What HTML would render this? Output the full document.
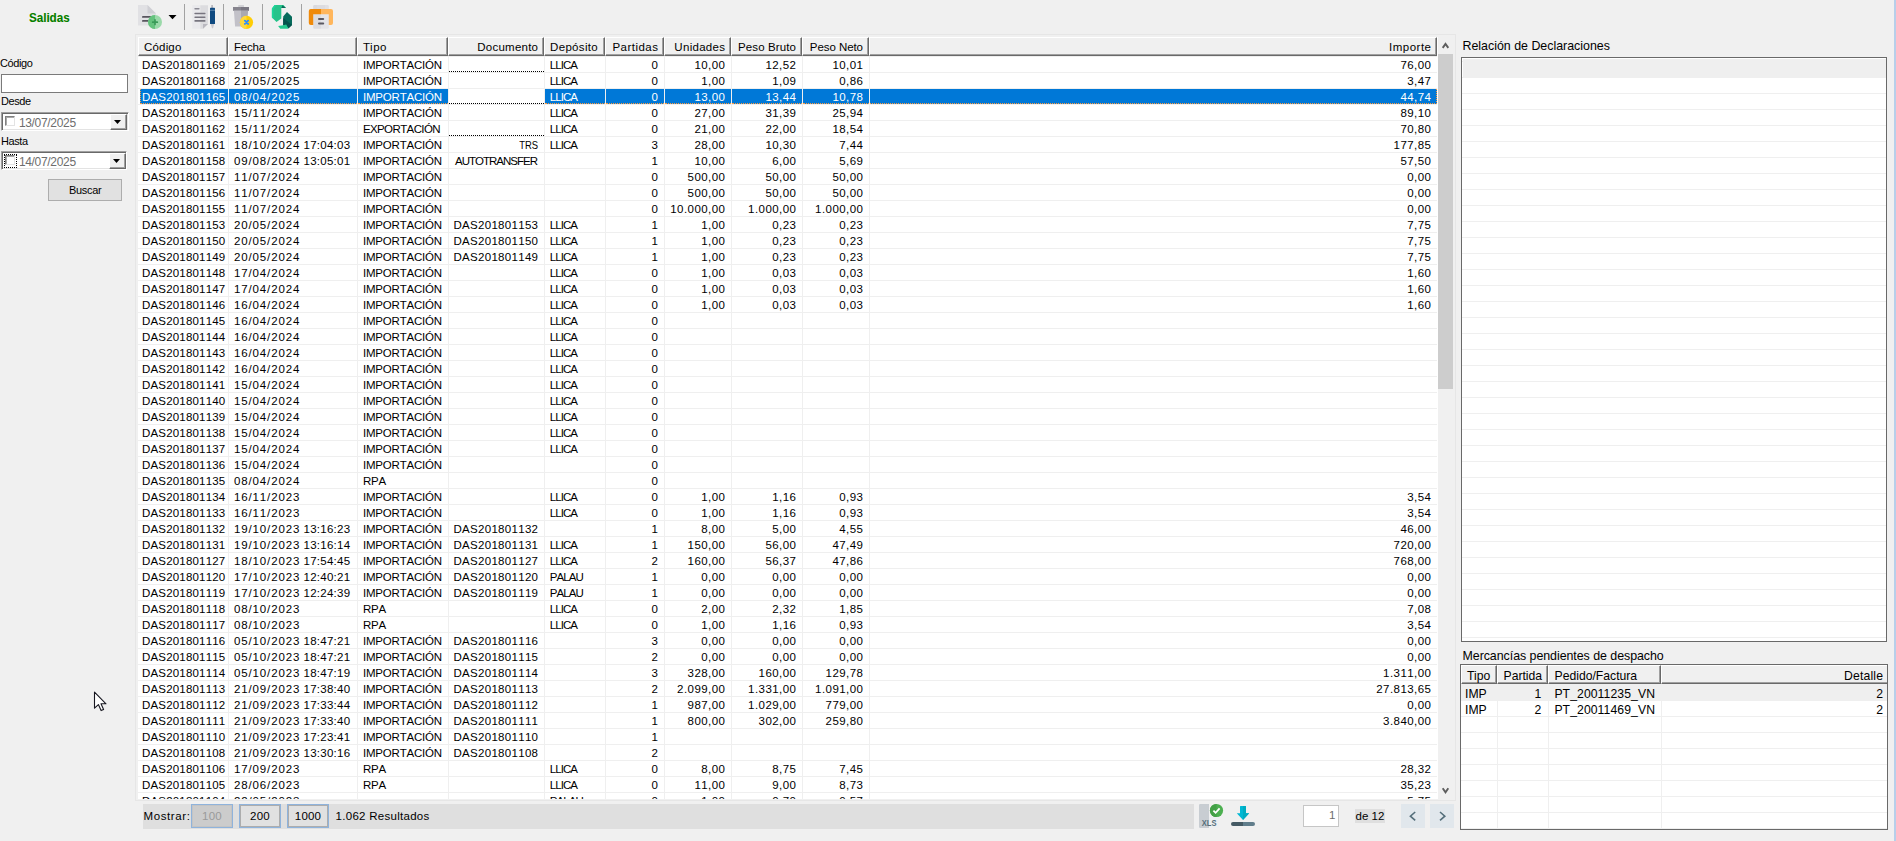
<!DOCTYPE html>
<html lang="es"><head><meta charset="utf-8"><title>Salidas</title>
<style>
*{box-sizing:border-box;margin:0;padding:0}
html,body{width:1896px;height:841px;overflow:hidden;background:#f0f0f0}
body{font-family:"Liberation Sans",sans-serif;font-size:12px;color:#000}
#app{position:relative;width:1896px;height:841px;overflow:hidden;background:#f0f0f0}
#app div,#app i,#app span.abs,#app svg{position:absolute}
i{display:block}

/* ===== main grid ===== */
#gframe{left:135px;top:34px;width:1321px;height:767px;border:1px solid #e6e6e6}
#grid{left:138px;top:37px;width:1300px;height:762px;background:#fff;overflow:hidden}
#ghead{left:0;top:0;width:1299px;height:19px;background:#f0f0f0}
.hc{top:0;height:19px;background:#f0f0f0;border-top:1px solid #fff;border-left:1px solid #fff;border-right:1px solid #696969;border-bottom:1px solid #696969;box-shadow:inset -1px -1px 0 #a0a0a0;line-height:16px;white-space:nowrap}
.hc span{position:absolute;top:1px}
.hc.l span{left:5px}
.hc.r span{right:5px}
.vl{top:19px;width:1px;height:743px;background:#efefef}
#rows{left:0;top:0;width:1299px;height:762px}
.row{left:0;width:1299px;height:16px;border-top:1px solid #efefef}
.c{top:0;height:15px;line-height:16px;white-space:nowrap}
.c span{position:absolute;top:0}
.c{font-size:11.5px;font-kerning:none}
.c.l span{left:4.9px}
.c4.l span{left:4.7px}
.c.r span{right:6px}
.c0.l span{left:2px}
.c0 span{letter-spacing:.18px}
.row.sel .c0.l span{left:1px}
.c1 span{letter-spacing:.88px;word-spacing:-.8px}
.c1 b.tm{font-weight:normal;letter-spacing:.26px}
.c2 span{letter-spacing:-.19px}
.c2.exp span{letter-spacing:-.6px}
.c3 span{letter-spacing:.3px;margin-right:-.3px}
.c3.up span{letter-spacing:-.99px;margin-right:.99px}
.c3.trs span{letter-spacing:0;margin-right:0;transform:scaleX(.82);transform-origin:100% 50%;right:6.1px}
.c4 span{letter-spacing:-.92px}
.c5 span,.c6 span,.c7 span,.c8 span,.c9 span{letter-spacing:.45px;margin-right:-.45px}
.hc{font-size:11.5px}
.h0 span{letter-spacing:.18px}
.h1 span{letter-spacing:-.22px}
.h2 span{letter-spacing:.5px}
.h3 span{letter-spacing:.24px;margin-right:-.24px}
.h4 span{letter-spacing:.34px}
.h5 span{letter-spacing:.48px;margin-right:-.48px}
.h6 span{letter-spacing:.29px;margin-right:-.29px}
.h7 span{letter-spacing:.12px;margin-right:-.12px}
.h8 span{letter-spacing:-.07px;margin-right:.07px}
.h9 span{letter-spacing:.5px;margin-right:-.5px}
.row.sel .c{background:#0078d7;color:#fff;border-bottom:1px dotted #ff9a3c}
.row.sel .c0{border-left:1px dotted #ff9a3c}
.row.sel .c9{border-right:1px dotted #ff9a3c}
.row.sel .c9 span{right:5px}
.row.sel .c3{background:#fff;border-bottom:1px dotted #000}
.c.dot{border-bottom:1px dotted #000}

/* ===== title / left panel ===== */
#title{left:29.4px;top:10.7px;font-size:12.8px;font-weight:bold;color:#008000;line-height:14px;white-space:nowrap;transform:scaleX(.906);transform-origin:0 0;text-shadow:.4px 0 0 rgba(190,160,0,.35)}
.lbl{font-size:11.6px;line-height:14px;letter-spacing:-.4px;white-space:nowrap;color:#000;transform:scaleX(.945);transform-origin:0 0}
#inp1{left:1px;top:74px;width:127px;height:19px;background:#fff;border:1px solid #7a7a7a}
.dtp{height:19px;background:#fff;border:1px solid;border-color:#a0a0a0 #fff #fff #a0a0a0;box-shadow:inset 1px 1px 0 #696969,inset -1px -1px 0 #e3e3e3}
.cb{left:3px;top:3px;width:10px;height:10px;background:#fff;border:1px solid;border-color:#808080 #e3e3e3 #e3e3e3 #808080;box-shadow:inset 1px 1px 0 #a9a9a9}
.foc{left:2px;top:2px;width:13px;height:14px;border:1px dotted #000}
.dt{left:16.9px;top:2.6px;font-size:12px;letter-spacing:-.32px;line-height:14px;color:#6d6d6d;white-space:nowrap}
.ddb{top:1px;width:17px;height:16px;background:#f0f0f0;border:1px solid;border-color:#fff #696969 #696969 #fff;box-shadow:inset -1px -1px 0 #a0a0a0}
#buscar{left:48px;top:179px;width:74px;height:22px;background:#e1e1e1;border:1px solid #adadad;font-size:11px;line-height:20px;text-align:center;letter-spacing:-.3px}
#buscar span{position:static;display:inline-block;font-size:11.6px;transform:scaleX(.945)}

/* ===== scrollbar ===== */
#vthumb{left:1438px;top:54px;width:15px;height:335px;background:#cdcdcd}

/* ===== bottom bar ===== */
#bbar{left:143px;top:804px;width:1051px;height:24.6px;background:#dfdfdf}
#mostrar{left:143.5px;top:807.6px;line-height:16px;font-size:11.5px;letter-spacing:.6px;white-space:nowrap}
#nres{left:335.6px;top:807.6px;line-height:16px;font-size:11.5px;letter-spacing:.28px;white-space:nowrap}
.pb{top:804px;width:42px;height:24px;font-size:11.5px;letter-spacing:.2px;background:#e1e1e1;border:1px solid #8fb3dc;box-shadow:inset 0 0 0 1px #adadad;text-align:center;line-height:22px}
.pb span{position:static}
.pb.dis{background:#cccccc;box-shadow:inset 0 0 0 1px #c4c4c4;color:#9a9a9a}
#pgin{left:1303px;top:805px;width:36px;height:22px;background:#fff;border:1px solid #c6c6c6;color:#6d6d6d;line-height:16px;font-size:11.5px}
#pgin span{position:absolute;right:2.5px;top:1.2px}
#pgof{left:1355px;top:809px;width:30px;height:14px;background:#dfdfdf;line-height:16px;white-space:nowrap;font-size:11.5px}
#pgof span{position:absolute;left:.5px;top:-1.2px}
.nav{top:804px;width:24px;height:24px;background:#e1e7ec}

/* ===== right panel ===== */
.rlbl{font-size:12.4px;line-height:16px;white-space:nowrap}
#rel{left:1461px;top:57px;width:426px;height:585px;background:#fff;border:1px solid #696969;background-image:linear-gradient(to bottom,transparent 15px,#efefef 15px);background-size:100% 16px;background-position:0 20px}
#rel .r0{left:.5px;top:.5px;width:423px;height:19px;background:#efefef}
#merc{left:1460px;top:664px;width:428px;height:166px;overflow:hidden;background:#fff;border:1px solid #696969;background-image:linear-gradient(to bottom,transparent 15px,#efefef 15px);background-size:100% 16px;background-position:0 36px;font-size:12.2px}
#mhead{left:0;top:0;width:426px;height:19px}
.mh{top:0;height:19px;background:#f0f0f0;border-top:1px solid #fff;border-left:1px solid #fff;border-right:1px solid #696969;border-bottom:1px solid #696969;box-shadow:inset -1px -1px 0 #a0a0a0;line-height:16px;white-space:nowrap}
.mh span{position:absolute;top:1.5px}
.mv{top:19px;width:1px;height:145px;background:#efefef}
.mr{left:0;width:426px;height:16px;line-height:16px;white-space:nowrap}
.mr.g{background:#efefef}
.mr span{position:absolute;top:2px}
#edge{left:1894px;top:0;width:2px;height:841px;background:#b7cfea}

</style></head><body>
<div id="app">
<!-- ===== title ===== -->
<div id="title">Salidas</div>

<!-- ===== toolbar ===== -->
<svg id="tb" width="220" height="34" viewBox="0 0 220 34" style="left:130px;top:0">
  <!-- icon 1: new document (+) -->
  <g>
    <path d="M8 5 H17.5 L26 13.5 V25.5 H8 Z" fill="#e1e1e4"/>
    <path d="M17.5 5 L26 13.5 H17.5 Z" fill="#cfcfd4"/>
    <rect x="12" y="16" width="10" height="1.8" rx=".9" fill="#57555e"/>
    <rect x="12" y="20" width="8" height="1.8" rx=".9" fill="#57555e"/>
    <circle cx="25" cy="22" r="7" fill="#9ad9a9"/>
    <path d="M25 15 A7 7 0 0 0 25 29 Z" fill="#64c27d"/>
    <path d="M25 19.9 V24.5 M22.7 22.2 H27.3" stroke="#3a9a58" stroke-width="1.7" stroke-linecap="round"/>
  </g>
  <!-- dropdown arrow -->
  <path d="M38.5 15 H46.5 L42.5 19.3 Z" fill="#000"/>
  <!-- separators -->
  <rect x="54" y="4" width="1" height="26" fill="#a2a2a2"/>
  <rect x="93" y="4" width="1" height="26" fill="#a2a2a2"/>
  <rect x="132" y="4" width="1" height="26" fill="#a2a2a2"/>
  <rect x="171" y="4" width="1" height="26" fill="#a2a2a2"/>
  <!-- icon 2: document + pen -->
  <g>
    <rect x="62.3" y="5.2" width="8" height="23.5" fill="#e9e9ec"/>
    <path d="M70.3 5.2 H78 V24 L73 28.7 H70.3 Z" fill="#dcdcdf"/>
    <path d="M73 24 H78 L73 28.7 Z" fill="#b9b8bf"/>
    <rect x="64.3" y="8" width="5.3" height="1.5" rx=".7" fill="#8b8a93"/>
    <rect x="64.3" y="12.7" width="11.3" height="1.6" rx=".8" fill="#77757f"/>
    <rect x="64.3" y="16.4" width="11.3" height="1.6" rx=".8" fill="#77757f"/>
    <rect x="64.3" y="20.1" width="11.3" height="1.6" rx=".8" fill="#77757f"/>
    <rect x="81.3" y="5" width="1.6" height="3" fill="#b4b3ba"/>
    <rect x="80" y="7.8" width="5" height="16.2" rx=".6" fill="#0f4a80"/>
    <rect x="80" y="9.8" width="5" height="1" fill="#5b86ad"/>
    <path d="M80.8 24 H84.2 L83.3 27.2 L82.5 28.8 L81.7 27.2 Z" fill="#c9c8ce"/>
  </g>
  <!-- icon 3: trash with x -->
  <g>
    <rect x="108.2" y="5" width="5.8" height="2.2" rx=".5" fill="#d2d2d6"/>
    <rect x="103" y="7" width="8" height="3.8" fill="#86848e"/>
    <rect x="111" y="7" width="8" height="3.8" fill="#7a7782"/>
    <path d="M103.9 10.8 H111 V26.6 H105.1 Z" fill="#c2c1c8"/>
    <path d="M111 10.8 H118.1 L116.9 26.6 H111 Z" fill="#aaa9b1"/>
    <circle cx="116.5" cy="22.3" r="6.6" fill="#ffcd05"/>
    <path d="M116.5 15.7 A6.6 6.6 0 0 0 116.5 28.9 Z" fill="#ffd83d"/>
    <path d="M114.9 20.7 L118.1 23.9 M118.1 20.7 L114.9 23.9" stroke="#2d8cff" stroke-width="1.9" stroke-linecap="round"/>
  </g>
  <!-- icon 4: refresh -->
  <g>
    <path d="M144.6 4.9 H153.5 L156 7.9 H151.3 V18.4 L146.5 21.9 L141.9 17.4 V8.6 Z" fill="#27c38a"/>
    <path d="M144.6 4.9 L141.9 8.6 V17.4 L143.4 18.8 V9.2 L146.4 4.9 Z" fill="#1cd69b"/>
    <path d="M152.4 5.3 L156 7.9 H151.4 Z" fill="#0b6b5a"/>
    <path d="M157 12 L162 16.8 V25 L158.6 28.3 L153.2 25.3 V16.5 Z" fill="#066b5b"/>
    <path d="M153.2 18 L162 25 L158.6 28.3 L153.2 25.3 Z" fill="#04524b"/>
    <path d="M148.1 25.9 L153.2 25.3 L156.2 24.6 L158.6 28.8 H150.3 Z" fill="#22c98e"/>
  </g>
  <!-- icon 5: printer -->
  <g>
    <rect x="183.2" y="5" width="7.8" height="6" rx="1.2" fill="#d9d9dd"/>
    <rect x="191" y="5" width="7.8" height="6" rx="1.2" fill="#e0e0e4"/>
    <rect x="187" y="5" width="8" height="6" fill="#dcdce0"/>
    <path d="M180.8 8.9 H191 V25 H180.8 Q178.8 25 178.8 23 V10.9 Q178.8 8.9 180.8 8.9 Z" fill="#ef8a0b"/>
    <path d="M191 8.9 H201 Q203 8.9 203 10.9 V23 Q203 25 201 25 H191 Z" fill="#ffb65c"/>
    <path d="M183.2 14.2 H191 V28.8 H184.4 Q183.2 28.8 183.2 27.6 Z" fill="#dcdce0"/>
    <path d="M191 14.2 H198.8 V27.6 Q198.8 28.8 197.6 28.8 H191 Z" fill="#e4e4e8"/>
    <rect x="188" y="18" width="6.2" height="2.1" rx="1" fill="#5a5861"/>
    <rect x="188" y="22.5" width="6.2" height="2.1" rx="1" fill="#5a5861"/>
  </g>
</svg>

<!-- ===== left filter panel ===== -->
<div class="lbl" style="left:.4px;top:56px">Código</div>
<div id="inp1"></div>
<div class="lbl" style="left:1px;top:94px">Desde</div>
<div class="dtp" style="left:1px;top:112px;width:128px">
  <i class="cb"></i><span class="abs dt">13/07/2025</span>
  <i class="ddb" style="left:108px"><svg width="7" height="4" viewBox="0 0 7 4" style="left:3px;top:5px"><path d="M0 0H7L3.5 4Z" fill="#000"/></svg></i>
</div>
<div class="lbl" style="left:1px;top:134px">Hasta</div>
<div class="dtp" style="left:1px;top:151px;width:126px">
  <i class="foc"></i><i class="cb" style="left:3px;top:3px;width:10px;height:10px"></i><span class="abs dt">14/07/2025</span>
  <i class="ddb" style="left:107px"><svg width="7" height="4" viewBox="0 0 7 4" style="left:3px;top:5px"><path d="M0 0H7L3.5 4Z" fill="#000"/></svg></i>
</div>
<div id="buscar"><span>Buscar</span></div>

<div id="gframe"></div>
<div id="grid">
<div id="ghead">
<div class="hc h0 l" style="left:0px;width:90px"><span>Código</span></div>
<div class="hc h1 l" style="left:90px;width:129px"><span>Fecha</span></div>
<div class="hc h2 l" style="left:219px;width:91px"><span>Tipo</span></div>
<div class="hc h3 r" style="left:310px;width:96px"><span>Documento</span></div>
<div class="hc h4 l" style="left:406px;width:61px"><span>Depósito</span></div>
<div class="hc h5 r" style="left:467px;width:59px"><span>Partidas</span></div>
<div class="hc h6 r" style="left:526px;width:67px"><span>Unidades</span></div>
<div class="hc h7 r" style="left:593px;width:71px"><span>Peso Bruto</span></div>
<div class="hc h8 r" style="left:664px;width:67px"><span>Peso Neto</span></div>
<div class="hc h9 r" style="left:731px;width:568px"><span>Importe</span></div>
</div>
<i class="vl" style="left:90px"></i>
<i class="vl" style="left:219px"></i>
<i class="vl" style="left:310px"></i>
<i class="vl" style="left:406px"></i>
<i class="vl" style="left:467px"></i>
<i class="vl" style="left:526px"></i>
<i class="vl" style="left:593px"></i>
<i class="vl" style="left:664px"></i>
<i class="vl" style="left:731px"></i>
<div id="rows">
<div class="row" style="top:19px">
<div class="c c0 l" style="left:2px;width:88px"><span>DAS201801169</span></div>
<div class="c c1 l" style="left:91px;width:128px"><span>21/05/2025</span></div>
<div class="c c2 l" style="left:220px;width:90px"><span>IMPORTACIÓN</span></div>
<div class="c c3 r dot" style="left:311px;width:95px"><span></span></div>
<div class="c c4 l" style="left:407px;width:60px"><span>LLICA</span></div>
<div class="c c5 r" style="left:468px;width:58px"><span>0</span></div>
<div class="c c6 r" style="left:527px;width:66px"><span>10,00</span></div>
<div class="c c7 r" style="left:594px;width:70px"><span>12,52</span></div>
<div class="c c8 r" style="left:665px;width:66px"><span>10,01</span></div>
<div class="c c9 r" style="left:732px;width:567px"><span>76,00</span></div>
</div>
<div class="row" style="top:35px">
<div class="c c0 l" style="left:2px;width:88px"><span>DAS201801168</span></div>
<div class="c c1 l" style="left:91px;width:128px"><span>21/05/2025</span></div>
<div class="c c2 l" style="left:220px;width:90px"><span>IMPORTACIÓN</span></div>
<div class="c c4 l" style="left:407px;width:60px"><span>LLICA</span></div>
<div class="c c5 r" style="left:468px;width:58px"><span>0</span></div>
<div class="c c6 r" style="left:527px;width:66px"><span>1,00</span></div>
<div class="c c7 r" style="left:594px;width:70px"><span>1,09</span></div>
<div class="c c8 r" style="left:665px;width:66px"><span>0,86</span></div>
<div class="c c9 r" style="left:732px;width:567px"><span>3,47</span></div>
</div>
<div class="row sel" style="top:51px">
<div class="c c0 l" style="left:2px;width:88px"><span>DAS201801165</span></div>
<div class="c c1 l" style="left:91px;width:128px"><span>08/04/2025</span></div>
<div class="c c2 l" style="left:220px;width:90px"><span>IMPORTACIÓN</span></div>
<div class="c c3 r dot" style="left:311px;width:95px"><span></span></div>
<div class="c c4 l" style="left:407px;width:60px"><span>LLICA</span></div>
<div class="c c5 r" style="left:468px;width:58px"><span>0</span></div>
<div class="c c6 r" style="left:527px;width:66px"><span>13,00</span></div>
<div class="c c7 r" style="left:594px;width:70px"><span>13,44</span></div>
<div class="c c8 r" style="left:665px;width:66px"><span>10,78</span></div>
<div class="c c9 r" style="left:732px;width:567px"><span>44,74</span></div>
</div>
<div class="row" style="top:67px">
<div class="c c0 l" style="left:2px;width:88px"><span>DAS201801163</span></div>
<div class="c c1 l" style="left:91px;width:128px"><span>15/11/2024</span></div>
<div class="c c2 l" style="left:220px;width:90px"><span>IMPORTACIÓN</span></div>
<div class="c c4 l" style="left:407px;width:60px"><span>LLICA</span></div>
<div class="c c5 r" style="left:468px;width:58px"><span>0</span></div>
<div class="c c6 r" style="left:527px;width:66px"><span>27,00</span></div>
<div class="c c7 r" style="left:594px;width:70px"><span>31,39</span></div>
<div class="c c8 r" style="left:665px;width:66px"><span>25,94</span></div>
<div class="c c9 r" style="left:732px;width:567px"><span>89,10</span></div>
</div>
<div class="row" style="top:83px">
<div class="c c0 l" style="left:2px;width:88px"><span>DAS201801162</span></div>
<div class="c c1 l" style="left:91px;width:128px"><span>15/11/2024</span></div>
<div class="c c2 l exp" style="left:220px;width:90px"><span>EXPORTACIÓN</span></div>
<div class="c c3 r dot" style="left:311px;width:95px"><span></span></div>
<div class="c c4 l" style="left:407px;width:60px"><span>LLICA</span></div>
<div class="c c5 r" style="left:468px;width:58px"><span>0</span></div>
<div class="c c6 r" style="left:527px;width:66px"><span>21,00</span></div>
<div class="c c7 r" style="left:594px;width:70px"><span>22,00</span></div>
<div class="c c8 r" style="left:665px;width:66px"><span>18,54</span></div>
<div class="c c9 r" style="left:732px;width:567px"><span>70,80</span></div>
</div>
<div class="row" style="top:99px">
<div class="c c0 l" style="left:2px;width:88px"><span>DAS201801161</span></div>
<div class="c c1 l" style="left:91px;width:128px"><span>18/10/2024 <b class="tm">17:04:03</b></span></div>
<div class="c c2 l" style="left:220px;width:90px"><span>IMPORTACIÓN</span></div>
<div class="c c3 r trs" style="left:311px;width:95px"><span>TRS</span></div>
<div class="c c4 l" style="left:407px;width:60px"><span>LLICA</span></div>
<div class="c c5 r" style="left:468px;width:58px"><span>3</span></div>
<div class="c c6 r" style="left:527px;width:66px"><span>28,00</span></div>
<div class="c c7 r" style="left:594px;width:70px"><span>10,30</span></div>
<div class="c c8 r" style="left:665px;width:66px"><span>7,44</span></div>
<div class="c c9 r" style="left:732px;width:567px"><span>177,85</span></div>
</div>
<div class="row" style="top:115px">
<div class="c c0 l" style="left:2px;width:88px"><span>DAS201801158</span></div>
<div class="c c1 l" style="left:91px;width:128px"><span>09/08/2024 <b class="tm">13:05:01</b></span></div>
<div class="c c2 l" style="left:220px;width:90px"><span>IMPORTACIÓN</span></div>
<div class="c c3 r up" style="left:311px;width:95px"><span>AUTOTRANSFER</span></div>
<div class="c c5 r" style="left:468px;width:58px"><span>1</span></div>
<div class="c c6 r" style="left:527px;width:66px"><span>10,00</span></div>
<div class="c c7 r" style="left:594px;width:70px"><span>6,00</span></div>
<div class="c c8 r" style="left:665px;width:66px"><span>5,69</span></div>
<div class="c c9 r" style="left:732px;width:567px"><span>57,50</span></div>
</div>
<div class="row" style="top:131px">
<div class="c c0 l" style="left:2px;width:88px"><span>DAS201801157</span></div>
<div class="c c1 l" style="left:91px;width:128px"><span>11/07/2024</span></div>
<div class="c c2 l" style="left:220px;width:90px"><span>IMPORTACIÓN</span></div>
<div class="c c5 r" style="left:468px;width:58px"><span>0</span></div>
<div class="c c6 r" style="left:527px;width:66px"><span>500,00</span></div>
<div class="c c7 r" style="left:594px;width:70px"><span>50,00</span></div>
<div class="c c8 r" style="left:665px;width:66px"><span>50,00</span></div>
<div class="c c9 r" style="left:732px;width:567px"><span>0,00</span></div>
</div>
<div class="row" style="top:147px">
<div class="c c0 l" style="left:2px;width:88px"><span>DAS201801156</span></div>
<div class="c c1 l" style="left:91px;width:128px"><span>11/07/2024</span></div>
<div class="c c2 l" style="left:220px;width:90px"><span>IMPORTACIÓN</span></div>
<div class="c c5 r" style="left:468px;width:58px"><span>0</span></div>
<div class="c c6 r" style="left:527px;width:66px"><span>500,00</span></div>
<div class="c c7 r" style="left:594px;width:70px"><span>50,00</span></div>
<div class="c c8 r" style="left:665px;width:66px"><span>50,00</span></div>
<div class="c c9 r" style="left:732px;width:567px"><span>0,00</span></div>
</div>
<div class="row" style="top:163px">
<div class="c c0 l" style="left:2px;width:88px"><span>DAS201801155</span></div>
<div class="c c1 l" style="left:91px;width:128px"><span>11/07/2024</span></div>
<div class="c c2 l" style="left:220px;width:90px"><span>IMPORTACIÓN</span></div>
<div class="c c5 r" style="left:468px;width:58px"><span>0</span></div>
<div class="c c6 r" style="left:527px;width:66px"><span>10.000,00</span></div>
<div class="c c7 r" style="left:594px;width:70px"><span>1.000,00</span></div>
<div class="c c8 r" style="left:665px;width:66px"><span>1.000,00</span></div>
<div class="c c9 r" style="left:732px;width:567px"><span>0,00</span></div>
</div>
<div class="row" style="top:179px">
<div class="c c0 l" style="left:2px;width:88px"><span>DAS201801153</span></div>
<div class="c c1 l" style="left:91px;width:128px"><span>20/05/2024</span></div>
<div class="c c2 l" style="left:220px;width:90px"><span>IMPORTACIÓN</span></div>
<div class="c c3 r" style="left:311px;width:95px"><span>DAS201801153</span></div>
<div class="c c4 l" style="left:407px;width:60px"><span>LLICA</span></div>
<div class="c c5 r" style="left:468px;width:58px"><span>1</span></div>
<div class="c c6 r" style="left:527px;width:66px"><span>1,00</span></div>
<div class="c c7 r" style="left:594px;width:70px"><span>0,23</span></div>
<div class="c c8 r" style="left:665px;width:66px"><span>0,23</span></div>
<div class="c c9 r" style="left:732px;width:567px"><span>7,75</span></div>
</div>
<div class="row" style="top:195px">
<div class="c c0 l" style="left:2px;width:88px"><span>DAS201801150</span></div>
<div class="c c1 l" style="left:91px;width:128px"><span>20/05/2024</span></div>
<div class="c c2 l" style="left:220px;width:90px"><span>IMPORTACIÓN</span></div>
<div class="c c3 r" style="left:311px;width:95px"><span>DAS201801150</span></div>
<div class="c c4 l" style="left:407px;width:60px"><span>LLICA</span></div>
<div class="c c5 r" style="left:468px;width:58px"><span>1</span></div>
<div class="c c6 r" style="left:527px;width:66px"><span>1,00</span></div>
<div class="c c7 r" style="left:594px;width:70px"><span>0,23</span></div>
<div class="c c8 r" style="left:665px;width:66px"><span>0,23</span></div>
<div class="c c9 r" style="left:732px;width:567px"><span>7,75</span></div>
</div>
<div class="row" style="top:211px">
<div class="c c0 l" style="left:2px;width:88px"><span>DAS201801149</span></div>
<div class="c c1 l" style="left:91px;width:128px"><span>20/05/2024</span></div>
<div class="c c2 l" style="left:220px;width:90px"><span>IMPORTACIÓN</span></div>
<div class="c c3 r" style="left:311px;width:95px"><span>DAS201801149</span></div>
<div class="c c4 l" style="left:407px;width:60px"><span>LLICA</span></div>
<div class="c c5 r" style="left:468px;width:58px"><span>1</span></div>
<div class="c c6 r" style="left:527px;width:66px"><span>1,00</span></div>
<div class="c c7 r" style="left:594px;width:70px"><span>0,23</span></div>
<div class="c c8 r" style="left:665px;width:66px"><span>0,23</span></div>
<div class="c c9 r" style="left:732px;width:567px"><span>7,75</span></div>
</div>
<div class="row" style="top:227px">
<div class="c c0 l" style="left:2px;width:88px"><span>DAS201801148</span></div>
<div class="c c1 l" style="left:91px;width:128px"><span>17/04/2024</span></div>
<div class="c c2 l" style="left:220px;width:90px"><span>IMPORTACIÓN</span></div>
<div class="c c4 l" style="left:407px;width:60px"><span>LLICA</span></div>
<div class="c c5 r" style="left:468px;width:58px"><span>0</span></div>
<div class="c c6 r" style="left:527px;width:66px"><span>1,00</span></div>
<div class="c c7 r" style="left:594px;width:70px"><span>0,03</span></div>
<div class="c c8 r" style="left:665px;width:66px"><span>0,03</span></div>
<div class="c c9 r" style="left:732px;width:567px"><span>1,60</span></div>
</div>
<div class="row" style="top:243px">
<div class="c c0 l" style="left:2px;width:88px"><span>DAS201801147</span></div>
<div class="c c1 l" style="left:91px;width:128px"><span>17/04/2024</span></div>
<div class="c c2 l" style="left:220px;width:90px"><span>IMPORTACIÓN</span></div>
<div class="c c4 l" style="left:407px;width:60px"><span>LLICA</span></div>
<div class="c c5 r" style="left:468px;width:58px"><span>0</span></div>
<div class="c c6 r" style="left:527px;width:66px"><span>1,00</span></div>
<div class="c c7 r" style="left:594px;width:70px"><span>0,03</span></div>
<div class="c c8 r" style="left:665px;width:66px"><span>0,03</span></div>
<div class="c c9 r" style="left:732px;width:567px"><span>1,60</span></div>
</div>
<div class="row" style="top:259px">
<div class="c c0 l" style="left:2px;width:88px"><span>DAS201801146</span></div>
<div class="c c1 l" style="left:91px;width:128px"><span>16/04/2024</span></div>
<div class="c c2 l" style="left:220px;width:90px"><span>IMPORTACIÓN</span></div>
<div class="c c4 l" style="left:407px;width:60px"><span>LLICA</span></div>
<div class="c c5 r" style="left:468px;width:58px"><span>0</span></div>
<div class="c c6 r" style="left:527px;width:66px"><span>1,00</span></div>
<div class="c c7 r" style="left:594px;width:70px"><span>0,03</span></div>
<div class="c c8 r" style="left:665px;width:66px"><span>0,03</span></div>
<div class="c c9 r" style="left:732px;width:567px"><span>1,60</span></div>
</div>
<div class="row" style="top:275px">
<div class="c c0 l" style="left:2px;width:88px"><span>DAS201801145</span></div>
<div class="c c1 l" style="left:91px;width:128px"><span>16/04/2024</span></div>
<div class="c c2 l" style="left:220px;width:90px"><span>IMPORTACIÓN</span></div>
<div class="c c4 l" style="left:407px;width:60px"><span>LLICA</span></div>
<div class="c c5 r" style="left:468px;width:58px"><span>0</span></div>
</div>
<div class="row" style="top:291px">
<div class="c c0 l" style="left:2px;width:88px"><span>DAS201801144</span></div>
<div class="c c1 l" style="left:91px;width:128px"><span>16/04/2024</span></div>
<div class="c c2 l" style="left:220px;width:90px"><span>IMPORTACIÓN</span></div>
<div class="c c4 l" style="left:407px;width:60px"><span>LLICA</span></div>
<div class="c c5 r" style="left:468px;width:58px"><span>0</span></div>
</div>
<div class="row" style="top:307px">
<div class="c c0 l" style="left:2px;width:88px"><span>DAS201801143</span></div>
<div class="c c1 l" style="left:91px;width:128px"><span>16/04/2024</span></div>
<div class="c c2 l" style="left:220px;width:90px"><span>IMPORTACIÓN</span></div>
<div class="c c4 l" style="left:407px;width:60px"><span>LLICA</span></div>
<div class="c c5 r" style="left:468px;width:58px"><span>0</span></div>
</div>
<div class="row" style="top:323px">
<div class="c c0 l" style="left:2px;width:88px"><span>DAS201801142</span></div>
<div class="c c1 l" style="left:91px;width:128px"><span>16/04/2024</span></div>
<div class="c c2 l" style="left:220px;width:90px"><span>IMPORTACIÓN</span></div>
<div class="c c4 l" style="left:407px;width:60px"><span>LLICA</span></div>
<div class="c c5 r" style="left:468px;width:58px"><span>0</span></div>
</div>
<div class="row" style="top:339px">
<div class="c c0 l" style="left:2px;width:88px"><span>DAS201801141</span></div>
<div class="c c1 l" style="left:91px;width:128px"><span>15/04/2024</span></div>
<div class="c c2 l" style="left:220px;width:90px"><span>IMPORTACIÓN</span></div>
<div class="c c4 l" style="left:407px;width:60px"><span>LLICA</span></div>
<div class="c c5 r" style="left:468px;width:58px"><span>0</span></div>
</div>
<div class="row" style="top:355px">
<div class="c c0 l" style="left:2px;width:88px"><span>DAS201801140</span></div>
<div class="c c1 l" style="left:91px;width:128px"><span>15/04/2024</span></div>
<div class="c c2 l" style="left:220px;width:90px"><span>IMPORTACIÓN</span></div>
<div class="c c4 l" style="left:407px;width:60px"><span>LLICA</span></div>
<div class="c c5 r" style="left:468px;width:58px"><span>0</span></div>
</div>
<div class="row" style="top:371px">
<div class="c c0 l" style="left:2px;width:88px"><span>DAS201801139</span></div>
<div class="c c1 l" style="left:91px;width:128px"><span>15/04/2024</span></div>
<div class="c c2 l" style="left:220px;width:90px"><span>IMPORTACIÓN</span></div>
<div class="c c4 l" style="left:407px;width:60px"><span>LLICA</span></div>
<div class="c c5 r" style="left:468px;width:58px"><span>0</span></div>
</div>
<div class="row" style="top:387px">
<div class="c c0 l" style="left:2px;width:88px"><span>DAS201801138</span></div>
<div class="c c1 l" style="left:91px;width:128px"><span>15/04/2024</span></div>
<div class="c c2 l" style="left:220px;width:90px"><span>IMPORTACIÓN</span></div>
<div class="c c4 l" style="left:407px;width:60px"><span>LLICA</span></div>
<div class="c c5 r" style="left:468px;width:58px"><span>0</span></div>
</div>
<div class="row" style="top:403px">
<div class="c c0 l" style="left:2px;width:88px"><span>DAS201801137</span></div>
<div class="c c1 l" style="left:91px;width:128px"><span>15/04/2024</span></div>
<div class="c c2 l" style="left:220px;width:90px"><span>IMPORTACIÓN</span></div>
<div class="c c4 l" style="left:407px;width:60px"><span>LLICA</span></div>
<div class="c c5 r" style="left:468px;width:58px"><span>0</span></div>
</div>
<div class="row" style="top:419px">
<div class="c c0 l" style="left:2px;width:88px"><span>DAS201801136</span></div>
<div class="c c1 l" style="left:91px;width:128px"><span>15/04/2024</span></div>
<div class="c c2 l" style="left:220px;width:90px"><span>IMPORTACIÓN</span></div>
<div class="c c5 r" style="left:468px;width:58px"><span>0</span></div>
</div>
<div class="row" style="top:435px">
<div class="c c0 l" style="left:2px;width:88px"><span>DAS201801135</span></div>
<div class="c c1 l" style="left:91px;width:128px"><span>08/04/2024</span></div>
<div class="c c2 l" style="left:220px;width:90px"><span>RPA</span></div>
<div class="c c5 r" style="left:468px;width:58px"><span>0</span></div>
</div>
<div class="row" style="top:451px">
<div class="c c0 l" style="left:2px;width:88px"><span>DAS201801134</span></div>
<div class="c c1 l" style="left:91px;width:128px"><span>16/11/2023</span></div>
<div class="c c2 l" style="left:220px;width:90px"><span>IMPORTACIÓN</span></div>
<div class="c c4 l" style="left:407px;width:60px"><span>LLICA</span></div>
<div class="c c5 r" style="left:468px;width:58px"><span>0</span></div>
<div class="c c6 r" style="left:527px;width:66px"><span>1,00</span></div>
<div class="c c7 r" style="left:594px;width:70px"><span>1,16</span></div>
<div class="c c8 r" style="left:665px;width:66px"><span>0,93</span></div>
<div class="c c9 r" style="left:732px;width:567px"><span>3,54</span></div>
</div>
<div class="row" style="top:467px">
<div class="c c0 l" style="left:2px;width:88px"><span>DAS201801133</span></div>
<div class="c c1 l" style="left:91px;width:128px"><span>16/11/2023</span></div>
<div class="c c2 l" style="left:220px;width:90px"><span>IMPORTACIÓN</span></div>
<div class="c c4 l" style="left:407px;width:60px"><span>LLICA</span></div>
<div class="c c5 r" style="left:468px;width:58px"><span>0</span></div>
<div class="c c6 r" style="left:527px;width:66px"><span>1,00</span></div>
<div class="c c7 r" style="left:594px;width:70px"><span>1,16</span></div>
<div class="c c8 r" style="left:665px;width:66px"><span>0,93</span></div>
<div class="c c9 r" style="left:732px;width:567px"><span>3,54</span></div>
</div>
<div class="row" style="top:483px">
<div class="c c0 l" style="left:2px;width:88px"><span>DAS201801132</span></div>
<div class="c c1 l" style="left:91px;width:128px"><span>19/10/2023 <b class="tm">13:16:23</b></span></div>
<div class="c c2 l" style="left:220px;width:90px"><span>IMPORTACIÓN</span></div>
<div class="c c3 r" style="left:311px;width:95px"><span>DAS201801132</span></div>
<div class="c c5 r" style="left:468px;width:58px"><span>1</span></div>
<div class="c c6 r" style="left:527px;width:66px"><span>8,00</span></div>
<div class="c c7 r" style="left:594px;width:70px"><span>5,00</span></div>
<div class="c c8 r" style="left:665px;width:66px"><span>4,55</span></div>
<div class="c c9 r" style="left:732px;width:567px"><span>46,00</span></div>
</div>
<div class="row" style="top:499px">
<div class="c c0 l" style="left:2px;width:88px"><span>DAS201801131</span></div>
<div class="c c1 l" style="left:91px;width:128px"><span>19/10/2023 <b class="tm">13:16:14</b></span></div>
<div class="c c2 l" style="left:220px;width:90px"><span>IMPORTACIÓN</span></div>
<div class="c c3 r" style="left:311px;width:95px"><span>DAS201801131</span></div>
<div class="c c4 l" style="left:407px;width:60px"><span>LLICA</span></div>
<div class="c c5 r" style="left:468px;width:58px"><span>1</span></div>
<div class="c c6 r" style="left:527px;width:66px"><span>150,00</span></div>
<div class="c c7 r" style="left:594px;width:70px"><span>56,00</span></div>
<div class="c c8 r" style="left:665px;width:66px"><span>47,49</span></div>
<div class="c c9 r" style="left:732px;width:567px"><span>720,00</span></div>
</div>
<div class="row" style="top:515px">
<div class="c c0 l" style="left:2px;width:88px"><span>DAS201801127</span></div>
<div class="c c1 l" style="left:91px;width:128px"><span>18/10/2023 <b class="tm">17:54:45</b></span></div>
<div class="c c2 l" style="left:220px;width:90px"><span>IMPORTACIÓN</span></div>
<div class="c c3 r" style="left:311px;width:95px"><span>DAS201801127</span></div>
<div class="c c4 l" style="left:407px;width:60px"><span>LLICA</span></div>
<div class="c c5 r" style="left:468px;width:58px"><span>2</span></div>
<div class="c c6 r" style="left:527px;width:66px"><span>160,00</span></div>
<div class="c c7 r" style="left:594px;width:70px"><span>56,37</span></div>
<div class="c c8 r" style="left:665px;width:66px"><span>47,86</span></div>
<div class="c c9 r" style="left:732px;width:567px"><span>768,00</span></div>
</div>
<div class="row" style="top:531px">
<div class="c c0 l" style="left:2px;width:88px"><span>DAS201801120</span></div>
<div class="c c1 l" style="left:91px;width:128px"><span>17/10/2023 <b class="tm">12:40:21</b></span></div>
<div class="c c2 l" style="left:220px;width:90px"><span>IMPORTACIÓN</span></div>
<div class="c c3 r" style="left:311px;width:95px"><span>DAS201801120</span></div>
<div class="c c4 l" style="left:407px;width:60px"><span>PALAU</span></div>
<div class="c c5 r" style="left:468px;width:58px"><span>1</span></div>
<div class="c c6 r" style="left:527px;width:66px"><span>0,00</span></div>
<div class="c c7 r" style="left:594px;width:70px"><span>0,00</span></div>
<div class="c c8 r" style="left:665px;width:66px"><span>0,00</span></div>
<div class="c c9 r" style="left:732px;width:567px"><span>0,00</span></div>
</div>
<div class="row" style="top:547px">
<div class="c c0 l" style="left:2px;width:88px"><span>DAS201801119</span></div>
<div class="c c1 l" style="left:91px;width:128px"><span>17/10/2023 <b class="tm">12:24:39</b></span></div>
<div class="c c2 l" style="left:220px;width:90px"><span>IMPORTACIÓN</span></div>
<div class="c c3 r" style="left:311px;width:95px"><span>DAS201801119</span></div>
<div class="c c4 l" style="left:407px;width:60px"><span>PALAU</span></div>
<div class="c c5 r" style="left:468px;width:58px"><span>1</span></div>
<div class="c c6 r" style="left:527px;width:66px"><span>0,00</span></div>
<div class="c c7 r" style="left:594px;width:70px"><span>0,00</span></div>
<div class="c c8 r" style="left:665px;width:66px"><span>0,00</span></div>
<div class="c c9 r" style="left:732px;width:567px"><span>0,00</span></div>
</div>
<div class="row" style="top:563px">
<div class="c c0 l" style="left:2px;width:88px"><span>DAS201801118</span></div>
<div class="c c1 l" style="left:91px;width:128px"><span>08/10/2023</span></div>
<div class="c c2 l" style="left:220px;width:90px"><span>RPA</span></div>
<div class="c c4 l" style="left:407px;width:60px"><span>LLICA</span></div>
<div class="c c5 r" style="left:468px;width:58px"><span>0</span></div>
<div class="c c6 r" style="left:527px;width:66px"><span>2,00</span></div>
<div class="c c7 r" style="left:594px;width:70px"><span>2,32</span></div>
<div class="c c8 r" style="left:665px;width:66px"><span>1,85</span></div>
<div class="c c9 r" style="left:732px;width:567px"><span>7,08</span></div>
</div>
<div class="row" style="top:579px">
<div class="c c0 l" style="left:2px;width:88px"><span>DAS201801117</span></div>
<div class="c c1 l" style="left:91px;width:128px"><span>08/10/2023</span></div>
<div class="c c2 l" style="left:220px;width:90px"><span>RPA</span></div>
<div class="c c4 l" style="left:407px;width:60px"><span>LLICA</span></div>
<div class="c c5 r" style="left:468px;width:58px"><span>0</span></div>
<div class="c c6 r" style="left:527px;width:66px"><span>1,00</span></div>
<div class="c c7 r" style="left:594px;width:70px"><span>1,16</span></div>
<div class="c c8 r" style="left:665px;width:66px"><span>0,93</span></div>
<div class="c c9 r" style="left:732px;width:567px"><span>3,54</span></div>
</div>
<div class="row" style="top:595px">
<div class="c c0 l" style="left:2px;width:88px"><span>DAS201801116</span></div>
<div class="c c1 l" style="left:91px;width:128px"><span>05/10/2023 <b class="tm">18:47:21</b></span></div>
<div class="c c2 l" style="left:220px;width:90px"><span>IMPORTACIÓN</span></div>
<div class="c c3 r" style="left:311px;width:95px"><span>DAS201801116</span></div>
<div class="c c5 r" style="left:468px;width:58px"><span>3</span></div>
<div class="c c6 r" style="left:527px;width:66px"><span>0,00</span></div>
<div class="c c7 r" style="left:594px;width:70px"><span>0,00</span></div>
<div class="c c8 r" style="left:665px;width:66px"><span>0,00</span></div>
<div class="c c9 r" style="left:732px;width:567px"><span>0,00</span></div>
</div>
<div class="row" style="top:611px">
<div class="c c0 l" style="left:2px;width:88px"><span>DAS201801115</span></div>
<div class="c c1 l" style="left:91px;width:128px"><span>05/10/2023 <b class="tm">18:47:21</b></span></div>
<div class="c c2 l" style="left:220px;width:90px"><span>IMPORTACIÓN</span></div>
<div class="c c3 r" style="left:311px;width:95px"><span>DAS201801115</span></div>
<div class="c c5 r" style="left:468px;width:58px"><span>2</span></div>
<div class="c c6 r" style="left:527px;width:66px"><span>0,00</span></div>
<div class="c c7 r" style="left:594px;width:70px"><span>0,00</span></div>
<div class="c c8 r" style="left:665px;width:66px"><span>0,00</span></div>
<div class="c c9 r" style="left:732px;width:567px"><span>0,00</span></div>
</div>
<div class="row" style="top:627px">
<div class="c c0 l" style="left:2px;width:88px"><span>DAS201801114</span></div>
<div class="c c1 l" style="left:91px;width:128px"><span>05/10/2023 <b class="tm">18:47:19</b></span></div>
<div class="c c2 l" style="left:220px;width:90px"><span>IMPORTACIÓN</span></div>
<div class="c c3 r" style="left:311px;width:95px"><span>DAS201801114</span></div>
<div class="c c5 r" style="left:468px;width:58px"><span>3</span></div>
<div class="c c6 r" style="left:527px;width:66px"><span>328,00</span></div>
<div class="c c7 r" style="left:594px;width:70px"><span>160,00</span></div>
<div class="c c8 r" style="left:665px;width:66px"><span>129,78</span></div>
<div class="c c9 r" style="left:732px;width:567px"><span>1.311,00</span></div>
</div>
<div class="row" style="top:643px">
<div class="c c0 l" style="left:2px;width:88px"><span>DAS201801113</span></div>
<div class="c c1 l" style="left:91px;width:128px"><span>21/09/2023 <b class="tm">17:38:40</b></span></div>
<div class="c c2 l" style="left:220px;width:90px"><span>IMPORTACIÓN</span></div>
<div class="c c3 r" style="left:311px;width:95px"><span>DAS201801113</span></div>
<div class="c c5 r" style="left:468px;width:58px"><span>2</span></div>
<div class="c c6 r" style="left:527px;width:66px"><span>2.099,00</span></div>
<div class="c c7 r" style="left:594px;width:70px"><span>1.331,00</span></div>
<div class="c c8 r" style="left:665px;width:66px"><span>1.091,00</span></div>
<div class="c c9 r" style="left:732px;width:567px"><span>27.813,65</span></div>
</div>
<div class="row" style="top:659px">
<div class="c c0 l" style="left:2px;width:88px"><span>DAS201801112</span></div>
<div class="c c1 l" style="left:91px;width:128px"><span>21/09/2023 <b class="tm">17:33:44</b></span></div>
<div class="c c2 l" style="left:220px;width:90px"><span>IMPORTACIÓN</span></div>
<div class="c c3 r" style="left:311px;width:95px"><span>DAS201801112</span></div>
<div class="c c5 r" style="left:468px;width:58px"><span>1</span></div>
<div class="c c6 r" style="left:527px;width:66px"><span>987,00</span></div>
<div class="c c7 r" style="left:594px;width:70px"><span>1.029,00</span></div>
<div class="c c8 r" style="left:665px;width:66px"><span>779,00</span></div>
<div class="c c9 r" style="left:732px;width:567px"><span>0,00</span></div>
</div>
<div class="row" style="top:675px">
<div class="c c0 l" style="left:2px;width:88px"><span>DAS201801111</span></div>
<div class="c c1 l" style="left:91px;width:128px"><span>21/09/2023 <b class="tm">17:33:40</b></span></div>
<div class="c c2 l" style="left:220px;width:90px"><span>IMPORTACIÓN</span></div>
<div class="c c3 r" style="left:311px;width:95px"><span>DAS201801111</span></div>
<div class="c c5 r" style="left:468px;width:58px"><span>1</span></div>
<div class="c c6 r" style="left:527px;width:66px"><span>800,00</span></div>
<div class="c c7 r" style="left:594px;width:70px"><span>302,00</span></div>
<div class="c c8 r" style="left:665px;width:66px"><span>259,80</span></div>
<div class="c c9 r" style="left:732px;width:567px"><span>3.840,00</span></div>
</div>
<div class="row" style="top:691px">
<div class="c c0 l" style="left:2px;width:88px"><span>DAS201801110</span></div>
<div class="c c1 l" style="left:91px;width:128px"><span>21/09/2023 <b class="tm">17:23:41</b></span></div>
<div class="c c2 l" style="left:220px;width:90px"><span>IMPORTACIÓN</span></div>
<div class="c c3 r" style="left:311px;width:95px"><span>DAS201801110</span></div>
<div class="c c5 r" style="left:468px;width:58px"><span>1</span></div>
</div>
<div class="row" style="top:707px">
<div class="c c0 l" style="left:2px;width:88px"><span>DAS201801108</span></div>
<div class="c c1 l" style="left:91px;width:128px"><span>21/09/2023 <b class="tm">13:30:16</b></span></div>
<div class="c c2 l" style="left:220px;width:90px"><span>IMPORTACIÓN</span></div>
<div class="c c3 r" style="left:311px;width:95px"><span>DAS201801108</span></div>
<div class="c c5 r" style="left:468px;width:58px"><span>2</span></div>
</div>
<div class="row" style="top:723px">
<div class="c c0 l" style="left:2px;width:88px"><span>DAS201801106</span></div>
<div class="c c1 l" style="left:91px;width:128px"><span>17/09/2023</span></div>
<div class="c c2 l" style="left:220px;width:90px"><span>RPA</span></div>
<div class="c c4 l" style="left:407px;width:60px"><span>LLICA</span></div>
<div class="c c5 r" style="left:468px;width:58px"><span>0</span></div>
<div class="c c6 r" style="left:527px;width:66px"><span>8,00</span></div>
<div class="c c7 r" style="left:594px;width:70px"><span>8,75</span></div>
<div class="c c8 r" style="left:665px;width:66px"><span>7,45</span></div>
<div class="c c9 r" style="left:732px;width:567px"><span>28,32</span></div>
</div>
<div class="row" style="top:739px">
<div class="c c0 l" style="left:2px;width:88px"><span>DAS201801105</span></div>
<div class="c c1 l" style="left:91px;width:128px"><span>28/06/2023</span></div>
<div class="c c2 l" style="left:220px;width:90px"><span>RPA</span></div>
<div class="c c4 l" style="left:407px;width:60px"><span>LLICA</span></div>
<div class="c c5 r" style="left:468px;width:58px"><span>0</span></div>
<div class="c c6 r" style="left:527px;width:66px"><span>11,00</span></div>
<div class="c c7 r" style="left:594px;width:70px"><span>9,00</span></div>
<div class="c c8 r" style="left:665px;width:66px"><span>8,73</span></div>
<div class="c c9 r" style="left:732px;width:567px"><span>35,23</span></div>
</div>
<div class="row" style="top:755px">
<div class="c c0 l" style="left:2px;width:88px"><span>DAS201801104</span></div>
<div class="c c1 l" style="left:91px;width:128px"><span>22/05/2023</span></div>
<div class="c c4 l" style="left:407px;width:60px"><span>PALAU</span></div>
<div class="c c5 r" style="left:468px;width:58px"><span>0</span></div>
<div class="c c6 r" style="left:527px;width:66px"><span>1,00</span></div>
<div class="c c7 r" style="left:594px;width:70px"><span>0,70</span></div>
<div class="c c8 r" style="left:665px;width:66px"><span>0,57</span></div>
<div class="c c9 r" style="left:732px;width:567px"><span>5,75</span></div>
</div>
</div>
</div>
<!-- ===== grid vertical scrollbar ===== -->
<div id="vthumb"></div>
<svg width="9" height="7" viewBox="0 0 9 7" style="left:1441px;top:42.3px"><path d="M1.7 5.9 L4.5 1.9 L7.3 5.9" fill="none" stroke="#5e5e5e" stroke-width="1.9"/></svg>
<svg width="9" height="7" viewBox="0 0 9 7" style="left:1441px;top:787.3px"><path d="M1.7 1.3 L4.5 5.3 L7.3 1.3" fill="none" stroke="#5e5e5e" stroke-width="1.9"/></svg>

<!-- ===== bottom pager bar ===== -->
<div id="bbar"></div>
<div id="mostrar">Mostrar:</div>
<div class="pb dis" style="left:191px"><span>100</span></div>
<div class="pb" style="left:239px"><span>200</span></div>
<div class="pb" style="left:287px"><span>1000</span></div>
<div id="nres">1.062 Resultados</div>

<!-- xls icon -->
<svg width="26" height="26" viewBox="0 0 26 26" style="left:1198px;top:803px">
  <path d="M2.2 1 H11 V25 H2.2 Q1 25 1 23.8 V2.2 Q1 1 2.2 1 Z" fill="#c8cdd2"/>
  <path d="M11 14 H20.8 V23.8 Q20.8 25 19.6 25 H11 Z" fill="#eceff1"/>
  <text x="3.8" y="22.9" font-family="Liberation Sans, sans-serif" font-size="8.8" font-weight="bold" fill="#546e7a" textLength="14.6" lengthAdjust="spacingAndGlyphs">XLS</text>
  <circle cx="18.5" cy="7.5" r="6.6" fill="#4caf50"/>
  <path d="M18.5 .9 A6.6 6.6 0 0 0 18.5 14.1 Z" fill="#43a047"/>
  <path d="M15.4 7.6 L17.6 9.8 L21.6 5.4" fill="none" stroke="#fff" stroke-width="1.8"/>
</svg>
<!-- download icon -->
<svg width="28" height="26" viewBox="0 0 28 26" style="left:1229px;top:803px">
  <path d="M11 3.6 Q11 3 11.6 3 H16.4 Q17 3 17 3.6 V10.2 H20.2 L14 17 L7.8 10.2 H11 Z" fill="#00b8d4"/>
  <path d="M14 3 H16.4 Q17 3 17 3.6 V10.2 H20.2 L14 17 Z" fill="#00acc1"/>
  <path d="M4 19 H14 V23 H4 A2 2 0 0 1 4 19 Z" fill="#455a64"/>
  <path d="M14 19 H24 A2 2 0 0 1 24 23 H14 Z" fill="#607d8b"/>
</svg>

<div id="pgin"><span>1</span></div>
<div id="pgof"><span>de 12</span></div>
<div class="nav" style="left:1401px"><svg width="24" height="24" viewBox="0 0 24 24" style="left:0;top:0"><path d="M14.2 8 L9.4 12.2 L14.2 16.4" fill="none" stroke="#546e7a" stroke-width="1.6"/></svg></div>
<div class="nav" style="left:1430px"><svg width="24" height="24" viewBox="0 0 24 24" style="left:0;top:0"><path d="M10 8 L14.8 12.2 L10 16.4" fill="none" stroke="#546e7a" stroke-width="1.6"/></svg></div>

<!-- ===== right panel ===== -->
<div class="rlbl" style="left:1462.5px;top:38px">Relación de Declaraciones</div>
<div id="rel"><i class="r0"></i></div>
<div class="rlbl" style="left:1462.5px;top:648px;letter-spacing:-.04px">Mercancías pendientes de despacho</div>
<div id="merc">
  <div id="mhead">
    <div class="mh" style="left:0;width:36px"><span style="left:5px">Tipo</span></div>
    <div class="mh" style="left:36px;width:51px"><span style="left:5.5px">Partida</span></div>
    <div class="mh" style="left:87px;width:113px"><span style="left:5.5px">Pedido/Factura</span></div>
    <div class="mh" style="left:200px;width:228px"><span style="right:5px;letter-spacing:.18px;margin-right:-.18px">Detalle</span></div>
  </div>
  <i class="mv" style="left:36px"></i><i class="mv" style="left:87px"></i><i class="mv" style="left:200px"></i>
  <div class="mr g" style="top:19px"><span style="left:4px">IMP</span><span style="right:345.8px">1</span><span style="left:93.4px;letter-spacing:.09px">PT_20011235_VN</span><span style="right:4px">2</span></div>
  <div class="mr" style="top:35px"><span style="left:4px">IMP</span><span style="right:345.8px">2</span><span style="left:93.4px;letter-spacing:.09px">PT_20011469_VN</span><span style="right:4px">2</span></div>
</div>

<!-- right window edge -->
<div id="edge"></div>

<!-- mouse cursor -->
<svg width="14" height="21" viewBox="0 0 14 21" style="left:93px;top:691px"><path d="M1.5 1.2 V17.2 L5.4 13.6 L8.1 19.6 L10.6 18.4 L8 12.8 H13 Z" fill="#fff" stroke="#16161f" stroke-width="1.1" stroke-linejoin="round"/></svg>

</div></body></html>
